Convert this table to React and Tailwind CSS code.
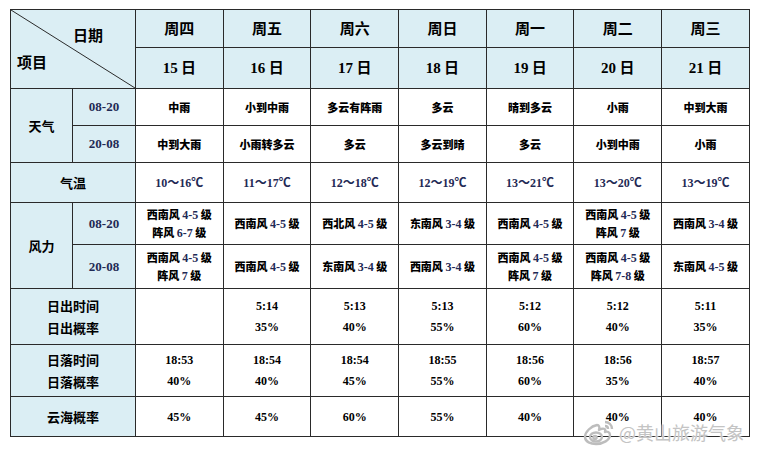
const days = [
  { w: '周四', d: '15', am: '中雨', pm: '中到大雨', t: '10～16℃', w1: [['西南风 ', '4-5', ' 级'], ['阵风 ', '6-7', ' 级']], w2: [['西南风 ', '4-5', ' 级'], ['阵风 ', '7', ' 级']], rise: null, set: ['18:53', '40%'], sea: '45%' },
  { w: '周五', d: '16', am: '小到中雨', pm: '小雨转多云', t: '11～17℃', w1: [['西南风 ', '4-5', ' 级']], w2: [['西南风 ', '4-5', ' 级']], rise: ['5:14', '35%'], set: ['18:54', '40%'], sea: '45%' },
  { w: '周六', d: '17', am: '多云有阵雨', pm: '多云', t: '12～18℃', w1: [['西北风 ', '4-5', ' 级']], w2: [['东南风 ', '3-4', ' 级']], rise: ['5:13', '40%'], set: ['18:54', '45%'], sea: '60%' },
  { w: '周日', d: '18', am: '多云', pm: '多云到晴', t: '12～19℃', w1: [['东南风 ', '3-4', ' 级']], w2: [['西南风 ', '3-4', ' 级']], rise: ['5:13', '55%'], set: ['18:55', '55%'], sea: '55%' },
  { w: '周一', d: '19', am: '晴到多云', pm: '多云', t: '13～21℃', w1: [['西南风 ', '4-5', ' 级']], w2: [['西南风 ', '4-5', ' 级'], ['阵风 ', '7', ' 级']], rise: ['5:12', '60%'], set: ['18:56', '60%'], sea: '40%' },
  { w: '周二', d: '20', am: '小雨', pm: '小到中雨', t: '13～20℃', w1: [['西南风 ', '4-5', ' 级'], ['阵风 ', '7', ' 级']], w2: [['西南风 ', '4-5', ' 级'], ['阵风 ', '7-8', ' 级']], rise: ['5:12', '40%'], set: ['18:56', '35%'], sea: '40%' },
  { w: '周三', d: '21', am: '中到大雨', pm: '小雨', t: '13～19℃', w1: [['西南风 ', '3-4', ' 级']], w2: [['东南风 ', '4-5', ' 级']], rise: ['5:11', '35%'], set: ['18:57', '40%'], sea: '40%' },
]

const cjk = { fontFamily: '"Noto Sans CJK SC", sans-serif' }
const serif = { fontFamily: '"Liberation Serif", "Noto Sans CJK SC", serif' }

const hd = 'bg-[#dbeef4] border border-[#2a2a2a] text-center align-middle p-0'
const td = 'bg-white border border-[#2a2a2a] text-center align-middle p-0'

function Wind({ lines }) {
  return (
    <div className="text-[11px] leading-[17px] font-black text-black" style={cjk}>
      {lines.map((l, i) => (
        <div key={i}>
          {l[0]}<span className="text-[#1f2a55] text-[12px] font-bold" style={serif}>{l[1]}</span>{l[2]}
        </div>
      ))}
    </div>
  )
}

function Pair({ v }) {
  if (!v) return null
  return (
    <div className="text-[12px] leading-[21px] font-bold text-black" style={serif}>
      <div>{v[0]}</div>
      <div>{v[1]}</div>
    </div>
  )
}

function Weibo() {
  return (
    <svg width="34" height="28" viewBox="0 0 34 28">
      <g fill="none" stroke="#bdbdbd" strokeWidth="2.4" strokeLinejoin="round">
        <path d="M14 7c-6 1-12 7-12 12 0 5 6 7 11 7 7 0 14-4 14-9 0-3-3-4-5-3 1-3-1-4-4-3l-2 1c1-3 0-5-2-5z" />
        <ellipse cx="13" cy="19" rx="6" ry="4.5" />
        <circle cx="12" cy="19.5" r="1.6" />
        <path d="M22 4c4 0 7 3 7 7" />
        <path d="M22 8c2 0 3 1 3 3" />
      </g>
    </svg>
  )
}

export default function App() {
  return (
    <div className="w-[759px] h-[451px] bg-white relative overflow-hidden" style={cjk}>
      <div className="pt-[9px] pl-[10px]">
        <table className="border-collapse table-fixed w-[739px] border border-[#2a2a2a]">
          <colgroup>
            <col className="w-[62px]" />
            <col className="w-[63px]" />
            {days.map((d, i) => <col key={i} className="w-[87.7px]" />)}
          </colgroup>
          <tbody>
            <tr className="h-[38px]">
              <td rowSpan={2} colSpan={2} className={hd + ' relative'}>
                <svg className="absolute inset-0 w-full h-full" preserveAspectRatio="none" viewBox="0 0 100 100">
                  <line x1="0" y1="0" x2="100" y2="100" stroke="#2a2a2a" strokeWidth="1" vectorEffect="non-scaling-stroke" />
                </svg>
                <span className="absolute left-[62px] top-[14px] text-[15px] font-bold text-black">日期</span>
                <span className="absolute left-[6px] top-[41px] text-[15px] font-bold text-black">项目</span>
              </td>
              {days.map((d, i) => (
                <td key={i} className={hd + ' text-[15px] font-bold text-black'}>{d.w}</td>
              ))}
            </tr>
            <tr className="h-[41px]">
              {days.map((d, i) => (
                <td key={i} className={hd + ' text-[15px] font-bold text-black'}>
                  <span style={serif}>{d.d}</span> 日
                </td>
              ))}
            </tr>
            <tr className="h-[37px]">
              <td rowSpan={2} className={hd + ' text-[13px] font-bold'}>天气</td>
              <td className={hd + ' text-[13px] font-bold text-[#1f2a55]'} style={serif}>08-20</td>
              {days.map((d, i) => (
                <td key={i} className={td + ' text-[11px] font-black'}>{d.am}</td>
              ))}
            </tr>
            <tr className="h-[37px]">
              <td className={hd + ' text-[13px] font-bold text-[#1f2a55]'} style={serif}>20-08</td>
              {days.map((d, i) => (
                <td key={i} className={td + ' text-[11px] font-black'}>{d.pm}</td>
              ))}
            </tr>
            <tr className="h-[40px]">
              <td colSpan={2} className={hd + ' text-[13px] font-bold'}>气温</td>
              {days.map((d, i) => (
                <td key={i} className={td + ' text-[12px] font-bold text-[#1f2a55]'} style={serif}>{d.t}</td>
              ))}
            </tr>
            <tr className="h-[42px]">
              <td rowSpan={2} className={hd + ' text-[13px] font-bold'}>风力</td>
              <td className={hd + ' text-[13px] font-bold text-[#1f2a55]'} style={serif}>08-20</td>
              {days.map((d, i) => (
                <td key={i} className={td}><Wind lines={d.w1} /></td>
              ))}
            </tr>
            <tr className="h-[44px]">
              <td className={hd + ' text-[13px] font-bold text-[#1f2a55]'} style={serif}>20-08</td>
              {days.map((d, i) => (
                <td key={i} className={td}><Wind lines={d.w2} /></td>
              ))}
            </tr>
            <tr className="h-[56px]">
              <td colSpan={2} className={hd + ' text-[13px] font-bold leading-[22px]'}>
                <div>日出时间</div>
                <div>日出概率</div>
              </td>
              {days.map((d, i) => (
                <td key={i} className={td}><Pair v={d.rise} /></td>
              ))}
            </tr>
            <tr className="h-[52px]">
              <td colSpan={2} className={hd + ' text-[13px] font-bold leading-[22px]'}>
                <div>日落时间</div>
                <div>日落概率</div>
              </td>
              {days.map((d, i) => (
                <td key={i} className={td}><Pair v={d.set} /></td>
              ))}
            </tr>
            <tr className="h-[40px]">
              <td colSpan={2} className={hd + ' text-[13px] font-bold'}>云海概率</td>
              {days.map((d, i) => (
                <td key={i} className={td + ' text-[12px] font-bold'} style={serif}>{d.sea}</td>
              ))}
            </tr>
          </tbody>
        </table>
      </div>
      <div className="absolute left-[583px] top-[418px] flex items-center gap-[2px]">
        <Weibo />
        <span className="text-[18px] text-[#c4c4c4] [text-shadow:0_0_2px_#fff,0_0_2px_#fff]">@黄山旅游气象</span>
      </div>
    </div>
  )
}
